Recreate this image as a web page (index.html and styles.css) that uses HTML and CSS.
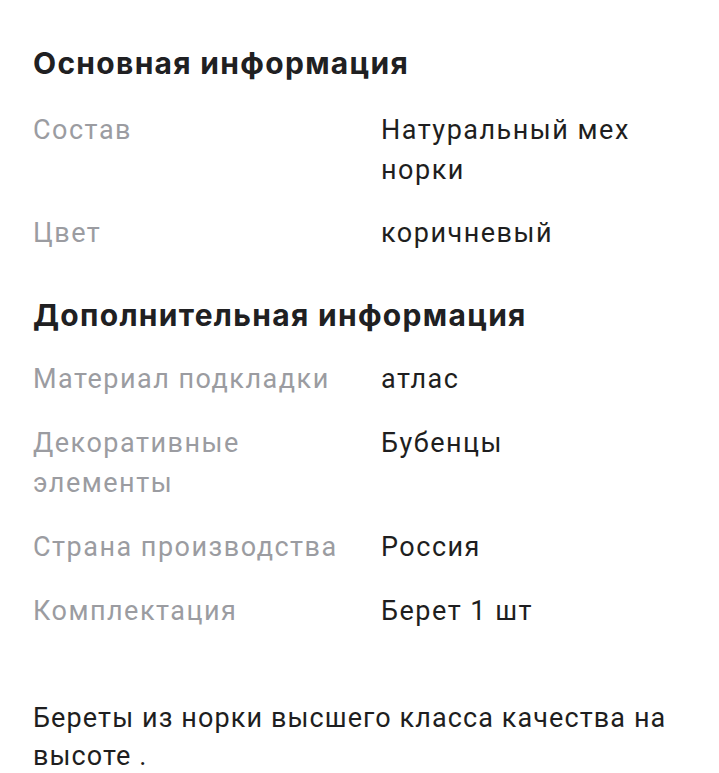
FILE: index.html
```html
<!DOCTYPE html>
<html lang="ru">
<head>
<meta charset="utf-8">
<link rel="stylesheet" href="styles.css">
</head>
<body>
<main class="page">
  <section class="block">
    <h2 class="title">Основная информация</h2>
    <dl class="specs specs-first">
      <div class="row"><dt>Состав</dt><dd>Натуральный мех норки</dd></div>
      <div class="row"><dt>Цвет</dt><dd>коричневый</dd></div>
    </dl>
  </section>
  <section class="block block-extra">
    <h2 class="title">Дополнительная информация</h2>
    <dl class="specs specs-extra">
      <div class="row"><dt>Материал подкладки</dt><dd>атлас</dd></div>
      <div class="row"><dt>Декоративные элементы</dt><dd>Бубенцы</dd></div>
      <div class="row"><dt>Страна производства</dt><dd>Россия</dd></div>
      <div class="row"><dt>Комплектация</dt><dd>Берет 1 шт</dd></div>
    </dl>
  </section>
  <p class="desc">Береты из норки высшего класса качества на высоте .</p>
</main>
</body>
</html>
```

FILE: styles.css
```css
html, body {
  margin: 0;
  padding: 0;
  background: #ffffff;
}

.page {
  padding: 43px 33px 0 33px;
  font-family: Roboto, "Noto Sans", sans-serif;
  color: #1e1e20;
}

.title {
  margin: 0;
  font-family: Inter, "Noto Sans", sans-serif;
  font-weight: 700;
  font-size: 30px;
  line-height: 40px;
  color: #202022;
  letter-spacing: 1.3px;
}

.specs {
  margin: 24px 0 0 0;
  display: flex;
  flex-direction: column;
  gap: 23px;
}

.specs-first {
  margin-top: 27px;
}

.specs-extra {
  gap: 24px;
}

.row {
  display: grid;
  grid-template-columns: 348px 1fr;
}

.row dt,
.row dd {
  margin: 0;
  font-size: 27px;
  line-height: 40px;
  letter-spacing: 1.5px;
}

.row dt {
  color: #9b9ca1;
  padding-right: 20px;
}

.row dd {
  color: #1e1e20;
  padding-right: 40px;
}

.block-extra {
  margin-top: 42px;
}

.desc {
  margin: 68px 0 0 0;
  font-size: 27px;
  line-height: 38px;
  letter-spacing: 1.1px;
  color: #1e1e20;
}
```
